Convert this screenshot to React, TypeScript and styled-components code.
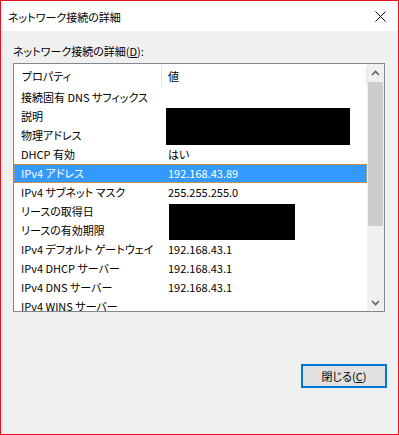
import React from "react";
import styled, { createGlobalStyle } from "styled-components";

const GlobalStyle = createGlobalStyle`
  html, body {
    margin: 0;
    padding: 0;
    background: #f0f0f0;
  }
  body {
    font-family: "Noto Sans CJK JP", "Noto Sans", sans-serif;
    font-size: 11px;
    color: #000;
    font-feature-settings: "palt";
  }
`;

const Window = styled.div`
  width: 399px;
  height: 435px;
  box-sizing: border-box;
  border: 1px solid #e81123;
  display: flex;
  flex-direction: column;
  background: #f0f0f0;
`;

const TitleBar = styled.div`
  height: 30px;
  background: #fff;
  display: flex;
  align-items: center;
  justify-content: space-between;
  padding: 0 0 0 7px;
`;

const Title = styled.div`
  font-size: 11px;
  line-height: 16px;
  margin-top: 1px;
`;

const CloseBox = styled.div`
  width: 46px;
  height: 30px;
  display: flex;
  align-items: center;
  justify-content: center;
  margin-right: -5px;
`;

const Body = styled.div`
  flex: 1;
  padding: 12px 11px 0 12px;
  display: flex;
  flex-direction: column;
`;

const Label = styled.div`
  line-height: 16px;
  height: 16px;
  margin-bottom: 4px;
`;

const ListBox = styled.div`
  position: relative;
  width: 372px;
  height: 249px;
  box-sizing: border-box;
  border: 1px solid #828790;
  background: #fff;
  display: flex;
  overflow: hidden;
`;

const ListContent = styled.div`
  position: relative;
  flex: 1;
  overflow: hidden;
`;

const Header = styled.div`
  height: 24px;
  display: flex;
  align-items: center;
`;

const HeaderCell = styled.div<{ $w: number; $pad: number }>`
  width: ${(p) => p.$w}px;
  height: 20px;
  box-sizing: border-box;
  padding-left: ${(p) => p.$pad}px;
  line-height: 20px;
  border-right: 1px solid #e5e5e5;
`;

const Row = styled.div<{ $selected?: boolean }>`
  height: 19px;
  display: flex;
  align-items: center;
  box-sizing: border-box;
  background: ${(p) => (p.$selected ? "#3399ff" : "transparent")};
  color: ${(p) => (p.$selected ? "#fff" : "#000")};
  outline: ${(p) => (p.$selected ? "1px dotted #e3a25a" : "none")};
  outline-offset: -1px;
`;

const Cell = styled.div<{ $w?: number; $pad: number }>`
  width: ${(p) => (p.$w ? `${p.$w}px` : "auto")};
  padding-left: ${(p) => p.$pad}px;
  box-sizing: border-box;
  white-space: nowrap;
  line-height: 19px;
`;

const Redact = styled.div`
  position: absolute;
  background: #000;
`;

const ScrollBar = styled.div`
  width: 17px;
  background: #f0f0f0;
  display: flex;
  flex-direction: column;
`;

const ArrowBtn = styled.div`
  height: 17px;
  display: flex;
  align-items: center;
  justify-content: center;
`;

const Track = styled.div`
  flex: 1;
  display: flex;
  flex-direction: column;
`;

const Thumb = styled.div`
  margin: 1px 1px 0 1px;
  height: 144px;
  background: #cdcdcd;
`;

const Footer = styled.div`
  display: flex;
  justify-content: flex-end;
  margin-top: 52px;
`;

const Button = styled.button`
  width: 86px;
  height: 24px;
  box-sizing: border-box;
  border: 2px solid #0078d7;
  background: #e1e1e1;
  font-family: inherit;
  font-size: 11px;
  font-feature-settings: "palt";
  color: #000;
  padding: 0;
  line-height: 18px;
`;

const rows: [string, string, boolean?][] = [
  ["接続固有 DNS サフィックス", ""],
  ["説明", ""],
  ["物理アドレス", ""],
  ["DHCP 有効", "はい"],
  ["IPv4 アドレス", "192.168.43.89", true],
  ["IPv4 サブネット マスク", "255.255.255.0"],
  ["リースの取得日", ""],
  ["リースの有効期限", ""],
  ["IPv4 デフォルト ゲートウェイ", "192.168.43.1"],
  ["IPv4 DHCP サーバー", "192.168.43.1"],
  ["IPv4 DNS サーバー", "192.168.43.1"],
  ["IPv4 WINS サーバー", ""],
];

function Chevron({ up }: { up?: boolean }) {
  return (
    <svg width="9" height="6" viewBox="0 0 9 6">
      <path
        d={up ? "M1 5 L4.5 1.5 L8 5" : "M1 1 L4.5 4.5 L8 1"}
        fill="none"
        stroke="#606060"
        strokeWidth="1.6"
      />
    </svg>
  );
}

export default function App() {
  return (
    <>
      <GlobalStyle />
      <Window>
        <TitleBar>
          <Title>ネットワーク接続の詳細</Title>
          <CloseBox>
            <svg width="11" height="11" viewBox="0 0 11 11">
              <path d="M0.5 0.5 L10.5 10.5 M10.5 0.5 L0.5 10.5" stroke="#000" strokeWidth="1" />
            </svg>
          </CloseBox>
        </TitleBar>
        <Body>
          <Label>
            ネットワーク接続の詳細(<u>D</u>):
          </Label>
          <ListBox>
            <ListContent>
              <Header>
                <HeaderCell $w={148} $pad={8}>
                  プロパティ
                </HeaderCell>
                <HeaderCell $w={205} $pad={6}>
                  値
                </HeaderCell>
              </Header>
              {rows.map(([k, v, sel]) => (
                <Row key={k} $selected={sel}>
                  <Cell $w={148} $pad={7}>
                    {k}
                  </Cell>
                  <Cell $pad={6}>{v}</Cell>
                </Row>
              ))}
              <Redact style={{ left: 152, top: 44, width: 184, height: 37 }} />
              <Redact style={{ left: 155, top: 140, width: 126, height: 36 }} />
            </ListContent>
            <ScrollBar>
              <ArrowBtn>
                <Chevron up />
              </ArrowBtn>
              <Track>
                <Thumb />
              </Track>
              <ArrowBtn>
                <Chevron />
              </ArrowBtn>
            </ScrollBar>
          </ListBox>
          <Footer>
            <Button>
              閉じる(<u>C</u>)
            </Button>
          </Footer>
        </Body>
      </Window>
    </>
  );
}
